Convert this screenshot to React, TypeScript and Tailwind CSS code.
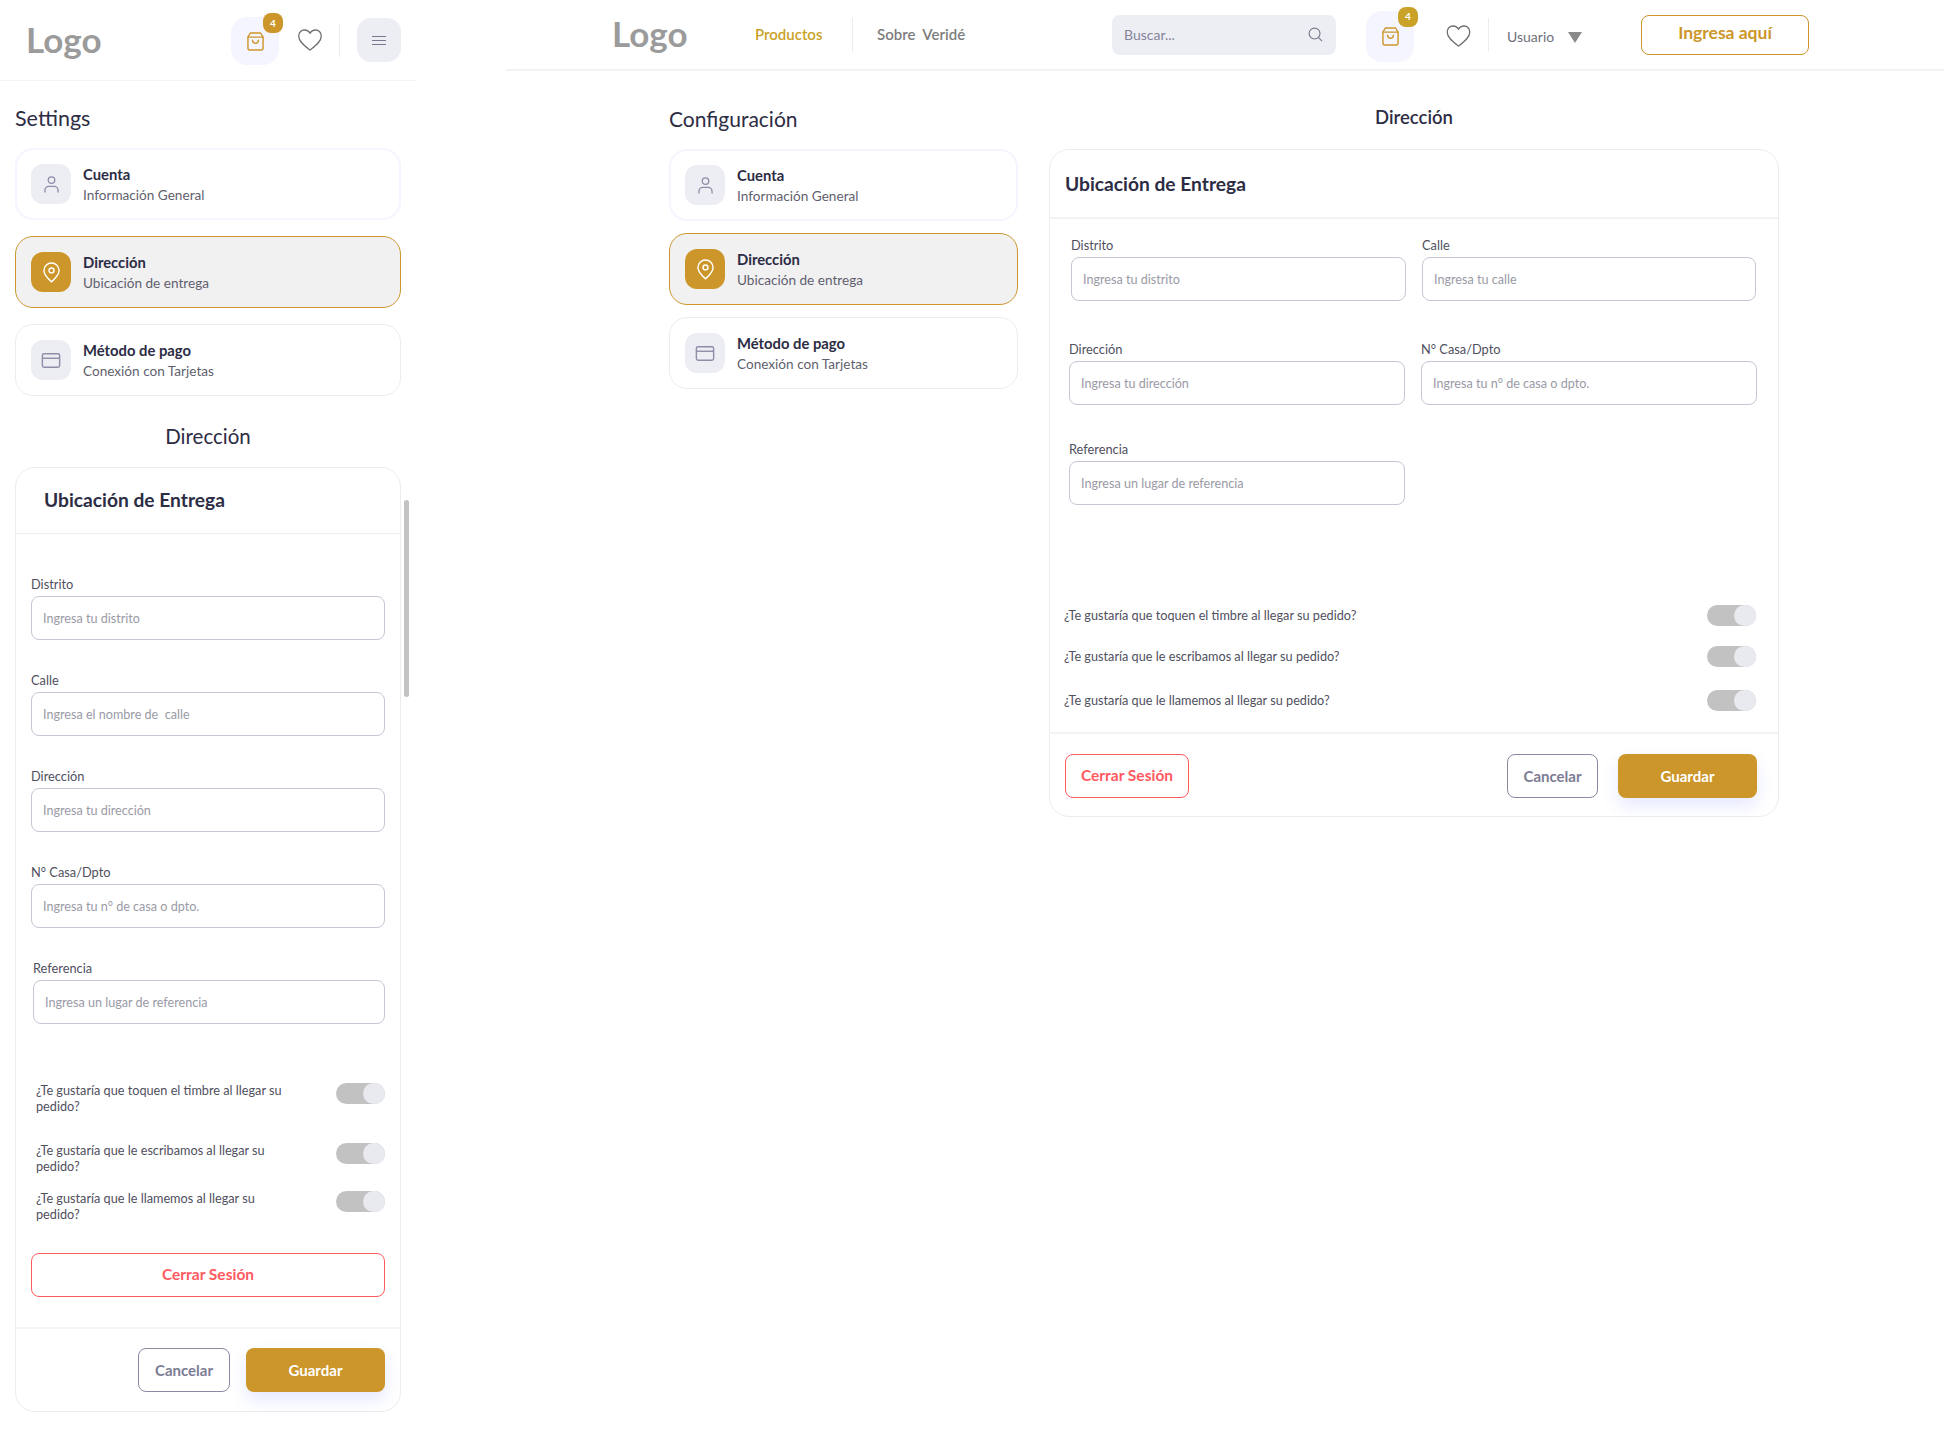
import React from "react";

const Bag = ({ c = "" }: { c?: string }) => (
  <svg viewBox="0 0 18 20" className={c} fill="none" stroke="#cc962a" strokeWidth="1.500" strokeLinejoin="round" strokeLinecap="round">
    <path d="M3.600 1h10.800L17 5.400V17a2 2 0 0 1-2 2H3a2 2 0 0 1-2-2V5.400L3.600 1Z" />
    <path d="M1 5.400h16" />
    <path d="M5.800 8.600c.3 2.400 1.500 3.400 3.200 3.400s2.900-1 3.200-3.400" />
  </svg>
);

const HeartIcon = ({ c = "" }: { c?: string }) => (
  <svg viewBox="0 0 24 22" className={c} fill="none" stroke="#6f6f6f" strokeWidth="1.300" strokeLinejoin="round">
    <path d="M12 21C7 17 .7 12.600.7 6.900.7 3.500 3.200 1 6.400 1 8.700 1 10.900 2.200 12 4.300 13.100 2.200 15.300 1 17.600 1c3.200 0 5.700 2.500 5.700 5.900C23.300 12.600 17 17 12 21Z" />
  </svg>
);

const UserIcon = () => (
  <svg viewBox="0 0 16 18" className="h-[17px] w-[15px]" fill="none" stroke="#8d8da8" strokeWidth="1.400" strokeLinecap="round">
    <circle cx="8" cy="4.300" r="3.500" />
    <path d="M1 17v-1.700C1 12.700 3 11 5.200 11h5.600c2.200 0 4.200 1.700 4.200 4.300V17" />
  </svg>
);

const PinIcon = () => (
  <svg viewBox="0 0 18 22" className="h-[21px] w-[17px]" fill="none" stroke="#ffffff" strokeWidth="1.500" strokeLinejoin="round">
    <path d="M9 20.800C5.500 17.600 1 13.900 1 8.900 1 4.500 4.600 1 9 1s8 3.500 8 7.900c0 5-4.500 8.700-8 11.900Z" />
    <circle cx="9" cy="8.800" r="2.600" />
  </svg>
);

const CardIcon = () => (
  <svg viewBox="0 0 20 16" className="h-[15px] w-5" fill="none" stroke="#8d8da8" strokeWidth="1.500">
    <rect x=".8" y=".8" width="18.400" height="14.400" rx="1.800" />
    <path d="M.8 5.600h18.400" />
  </svg>
);

const SearchIcon = () => (
  <svg viewBox="0 0 16 16" className="h-[15px] w-[15px]" fill="none" stroke="#7a7a8c" strokeWidth="1.200" strokeLinecap="round">
    <circle cx="7" cy="7" r="5.800" />
    <path d="m11.300 11.300 3.400 3.400" />
  </svg>
);

const MenuCard = ({ icon, title, sub, active, first }: { icon: React.ReactNode; title: string; sub: string; active?: boolean; first?: boolean }) => (
  <div
    className={
      "flex h-[72px] items-center gap-3 rounded-[18px] " +
      (active
        ? "border border-[#cc962a] bg-[#f1f1f2] px-[15px]"
        : first
          ? "border-2 border-[#f4f5ff] bg-white px-[14px]"
          : "border border-[#ececef] bg-white px-[15px]")
    }
  >
    <div className={"flex h-10 w-10 shrink-0 items-center justify-center rounded-xl " + (active ? "bg-[#cc962a]" : "bg-[#eceef3]")}>{icon}</div>
    <div className="flex flex-col">
      <span className="text-[14.800px] leading-5 font-bold text-[#2c2c44]">{title}</span>
      <span className="mt-px text-[13.600px] leading-5 text-[#5f5f6e]">{sub}</span>
    </div>
  </div>
);

const Menu = () => (
  <>
    <MenuCard first icon={<UserIcon />} title="Cuenta" sub="Información General" />
    <MenuCard active icon={<PinIcon />} title="Dirección" sub="Ubicación de entrega" />
    <MenuCard icon={<CardIcon />} title="Método de pago" sub="Conexión con Tarjetas" />
  </>
);

const Field = ({ label, ph, c = "" }: { label: string; ph: string; c?: string }) => (
  <label className={"block " + c}>
    <span className="block text-[12.800px] leading-4 text-[#4f4f5e]">{label}</span>
    <input
      readOnly
      placeholder={ph}
      className="mt-1 block h-11 w-full rounded-lg border border-[#c6c6d4] bg-white px-[11px] text-[12.600px] outline-none placeholder:text-[#9a9aa6]"
    />
  </label>
);

const Toggle = () => (
  <div className="flex h-[21px] w-[49px] shrink-0 justify-end rounded-full bg-[#c2c2c2]">
    <div className="h-[21px] w-[22px] rounded-full bg-[#e9eaef]" />
  </div>
);

const BtnCancel = ({ c }: { c: string }) => (
  <button className={"h-11 rounded-lg border border-[#8a8aa3] bg-white text-[15px] font-bold text-[#7c7c94] " + c}>Cancelar</button>
);
const BtnSave = () => (
  <button className="h-11 w-[139px] rounded-lg bg-[#cc962a] text-[15px] font-bold text-white shadow-[0_8px_16px_rgba(100,120,255,0.16)]">Guardar</button>
);
const BtnLogout = ({ c }: { c: string }) => (
  <button className={"h-11 rounded-lg border border-[#ff5a5f] bg-white text-[15.500px] font-bold text-[#ff5a5f] " + c}>Cerrar Sesión</button>
);

const MobileToggle = ({ text, c }: { text: string; c: string }) => (
  <div className={"flex items-start justify-between pr-[15px] pl-[20px] " + c}>
    <p className="w-[260px] text-[12.700px] leading-4 text-[#4f4f5e]">{text}</p>
    <div className="mt-px"><Toggle /></div>
  </div>
);

const Mobile = () => (
  <section className="relative w-[416px] shrink-0">
    <header className="flex h-[81px] items-center border-b border-[#f3f3f5] pl-[26px]">
      <span className="w-[205px] pb-[2px] text-[35px] leading-none font-bold text-[#9b9b9b]">Logo</span>
      <div className="relative mt-[2px] flex h-12 w-12 items-center justify-center rounded-2xl bg-[#f4f5ff]">
        <Bag c="h-[19px] w-[17px]" />
        <span className="absolute -top-1 -right-1 flex h-5 w-5 items-center justify-center rounded-lg bg-[#cc962a] text-[10px] font-bold text-white">4</span>
      </div>
      <HeartIcon c="ml-[19px] h-[22px] w-6" />
      <div className="ml-[17px] h-[33px] w-px bg-[#ececef]" />
      <div className="ml-[17px] flex h-11 w-11 items-center justify-center rounded-[14px] bg-[#eceef3]">
        <div className="flex w-[14px] flex-col gap-[3px]">
          <i className="h-px w-full bg-[#77778f]" />
          <i className="h-px w-full bg-[#77778f]" />
          <i className="h-px w-full bg-[#77778f]" />
        </div>
      </div>
    </header>
    <div className="px-[15px]">
      <h2 className="mt-[22px] text-[21.500px] leading-[30px] text-[#2c2c44]">Settings</h2>
      <div className="mt-[15px] flex flex-col gap-4">
        <Menu />
      </div>
      <h2 className="mt-[25px] text-center text-[20.500px] leading-[30px] text-[#2c2c44]">Dirección</h2>
      <div className="mt-4 h-[945px] rounded-[20px] border border-[#ececef]">
        <div className="flex h-[66px] items-center border-b border-[#eeeef3] pl-[28px] text-[19.200px] font-bold text-[#2c2c44]">Ubicación de Entrega</div>
        <div className="flex flex-col gap-8 pt-[42px] pr-[15px] pl-[15px]">
          <Field label="Distrito" ph="Ingresa tu distrito" />
          <Field label="Calle" ph="Ingresa el nombre de  calle" />
          <Field label="Dirección" ph="Ingresa tu dirección" />
          <Field label="N° Casa/Dpto" ph="Ingresa tu n° de casa o dpto." />
          <Field label="Referencia" ph="Ingresa un lugar de referencia" c="ml-[2px]" />
        </div>
        <MobileToggle c="mt-[58px]" text="¿Te gustaría que toquen el timbre al llegar su pedido?" />
        <MobileToggle c="mt-[28px]" text="¿Te gustaría que le escribamos al llegar su pedido?" />
        <MobileToggle c="mt-4" text="¿Te gustaría que le llamemos al llegar su pedido?" />
        <div className="mt-[31px] px-[15px]">
          <BtnLogout c="w-full" />
        </div>
        <div className="mt-[30px] flex justify-end gap-4 border-t-2 border-[#f5f5f7] pt-[19px] pr-[15px]">
          <BtnCancel c="w-[92px]" />
          <BtnSave />
        </div>
      </div>
    </div>
    <div className="absolute top-[500px] left-[404px] h-[197px] w-[5px] rounded-full bg-[#c2c2c2]" />
  </section>
);

const DeskToggle = ({ text, c }: { text: string; c: string }) => (
  <div className={"flex items-center justify-between pr-[22px] pl-[14px] text-[12.700px] text-[#4f4f5e] " + c}>
    <span>{text}</span>
    <Toggle />
  </div>
);

const Desktop = () => (
  <section className="ml-[90px] flex-1">
    <header className="flex h-[71px] items-center border-b-2 border-[#f3f3f5] pl-[106px]">
      <span className="w-[143px] pb-[2px] text-[35px] leading-none font-bold text-[#9b9b9b]">Logo</span>
      <a className="w-[97px] text-[15px] font-semibold text-[#c9a227]">Productos</a>
      <div className="h-[34px] w-px bg-[#ececef]" />
      <a className="ml-6 w-[235px] text-[15px] font-semibold whitespace-pre text-[#7d7d7d]">Sobre  Veridé</a>
      <div className="flex h-10 w-[224px] items-center justify-between rounded-lg bg-[#eceef3] pr-[13px] pl-3 text-[14px] text-[#85859a]">
        <span>Buscar...</span>
        <SearchIcon />
      </div>
      <div className="relative mt-[3px] ml-[30px] flex h-[51px] w-12 items-center justify-center rounded-2xl bg-[#f4f5ff]">
        <Bag c="h-[19px] w-[17px]" />
        <span className="absolute -top-1 -right-1 flex h-5 w-5 items-center justify-center rounded-lg bg-[#c9a227] text-[10px] font-bold text-white">4</span>
      </div>
      <HeartIcon c="mt-[3px] ml-8 h-[22px] w-[25px]" />
      <div className="ml-[17px] h-[33px] w-px bg-[#ececef]" />
      <span className="mt-[3px] ml-[18px] w-[61px] text-[14px] text-[#6f6f7a]">Usuario</span>
      <svg viewBox="0 0 14 11" className="mt-[6px] h-[11px] w-[14px]" fill="#8a8a8a"><path d="M0 0h14L7 11Z" /></svg>
      <button className="ml-[59px] h-10 w-[168px] rounded-lg border border-[#cc962a] bg-white pb-[2px] text-[17.500px] font-bold text-[#cc962a]">Ingresa aquí</button>
    </header>
    <div className="flex pl-[163px]">
      <div className="w-[349px] shrink-0">
        <h2 className="mt-[33px] text-[21px] leading-[30px] text-[#2c2c44]">Configuración</h2>
        <div className="mt-[15px] flex flex-col gap-3">
          <Menu />
        </div>
      </div>
      <div className="ml-[31px] w-[730px] shrink-0">
        <h2 className="mt-[31px] text-center text-[18.500px] leading-[30px] font-semibold text-[#2c2c44]">Dirección</h2>
        <div className="mt-[17px] h-[668px] rounded-[20px] border border-[#ececef]">
          <div className="flex h-[69px] items-center border-b-2 border-[#f3f3f5] pt-[2px] pl-[15px] text-[19.200px] font-bold text-[#2c2c44]">Ubicación de Entrega</div>
          <div className="flex gap-4 pt-[18px] pl-[21px]">
            <Field c="w-[335px]" label="Distrito" ph="Ingresa tu distrito" />
            <Field c="w-[334px]" label="Calle" ph="Ingresa tu calle" />
          </div>
          <div className="flex gap-4 pt-10 pl-[19px]">
            <Field c="w-[336px]" label="Dirección" ph="Ingresa tu dirección" />
            <Field c="w-[336px]" label="N° Casa/Dpto" ph="Ingresa tu n° de casa o dpto." />
          </div>
          <div className="pt-9 pl-[19px]">
            <Field c="w-[336px]" label="Referencia" ph="Ingresa un lugar de referencia" />
          </div>
          <DeskToggle c="mt-[100px]" text="¿Te gustaría que toquen el timbre al llegar su pedido?" />
          <DeskToggle c="mt-5" text="¿Te gustaría que le escribamos al llegar su pedido?" />
          <DeskToggle c="mt-[23px]" text="¿Te gustaría que le llamemos al llegar su pedido?" />
          <div className="mt-[21px] flex items-center border-t-2 border-[#f3f3f5] pt-5 pr-[21px] pl-[15px]">
            <BtnLogout c="w-[124px]" />
            <div className="ml-auto flex gap-5">
              <BtnCancel c="w-[91px]" />
              <BtnSave />
            </div>
          </div>
        </div>
      </div>
    </div>
  </section>
);

export default function App() {
  return (
    <div className="flex min-h-[1429px] w-[1944px] bg-white font-['Lato','Noto_Sans',sans-serif]">
      <Mobile />
      <Desktop />
    </div>
  );
}
